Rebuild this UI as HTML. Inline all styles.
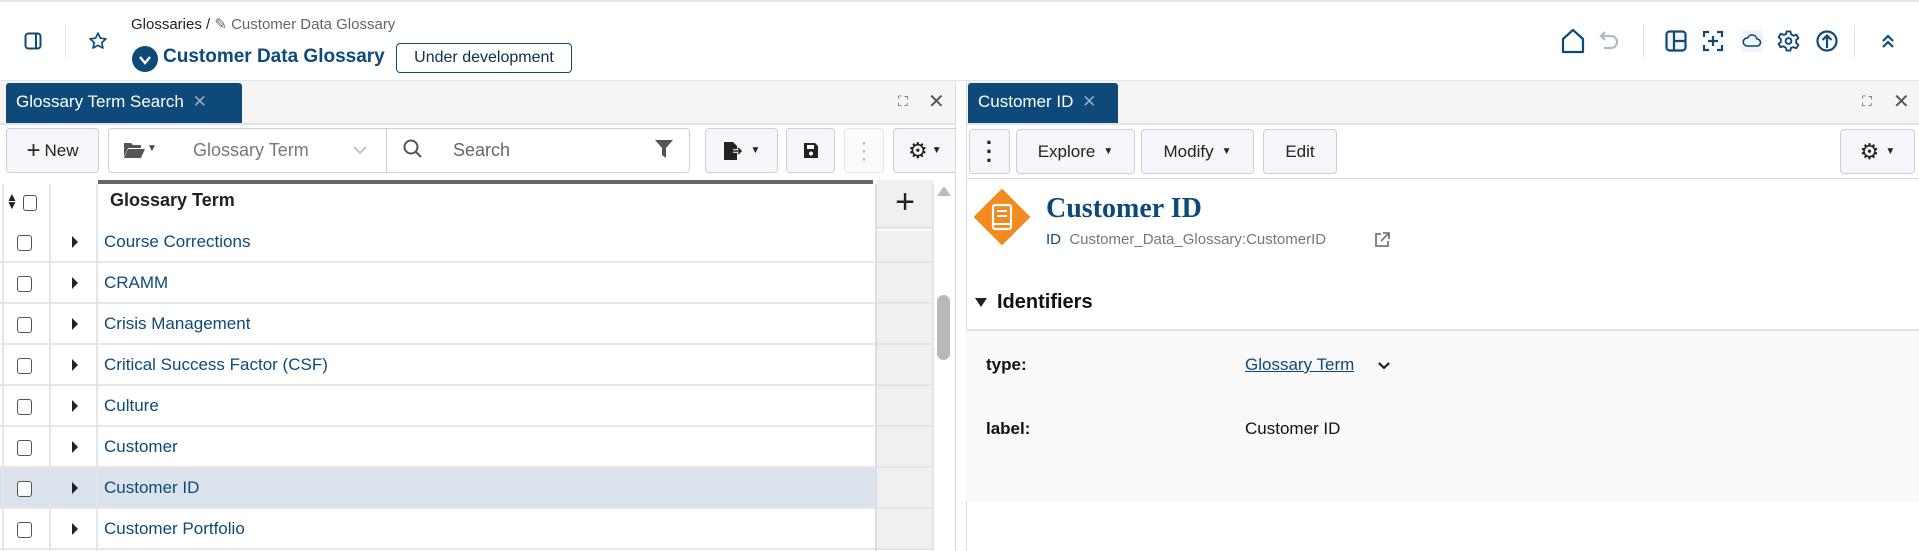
<!DOCTYPE html>
<html><head><meta charset="utf-8"><style>
*{box-sizing:border-box;margin:0;padding:0}
body{width:1919px;height:551px;overflow:hidden;background:#fff;font-family:"Liberation Sans",sans-serif;position:relative;color:#222}
.a{position:absolute}
.btn{position:absolute;border:1px solid #c9cfdc;border-radius:4px;background:#f5f6fa;display:flex;align-items:center;justify-content:center;font-size:17px;color:#222}
.row{position:absolute;left:0;width:876px;height:41px;border-bottom:2px solid #e5e7ea;background:#fff}
.row .cb{position:absolute;left:17px;top:13px;width:15px;height:16px;border:1.5px solid #555;border-radius:3px;background:#fff}
.row .tri{position:absolute;left:72px;top:14px;width:0;height:0;border-left:6px solid #222;border-top:6px solid transparent;border-bottom:6px solid transparent}
.row .t{position:absolute;left:104px;top:10px;font-size:17px;color:#0d4a7a}
.rc{position:absolute;left:877px;width:56px;height:41px;background:#eff0f2;border-bottom:2px solid #e3e5e8}
</style></head><body>
<div class="a" style="left:0;top:0;width:1919px;height:2px;background:#e6e8eb"></div>
<!-- header -->
<svg class="a" style="left:24px;top:32px" width="18" height="18" viewBox="0 0 18 18"><rect x="1.5" y="1.5" width="15" height="15" rx="3" fill="none" stroke="#0d4a7a" stroke-width="2"/><line x1="12" y1="2" x2="12" y2="16" stroke="#0d4a7a" stroke-width="2"/></svg>
<div class="a" style="left:65px;top:25px;width:1px;height:32px;background:#e0e3e8"></div>
<svg class="a" style="left:88px;top:31px" width="20" height="20" viewBox="0 0 24 24"><path d="M12 2.5l2.9 6.1 6.6.8-4.9 4.5 1.3 6.6L12 17.2l-5.9 3.3 1.3-6.6-4.9-4.5 6.6-.8z" fill="none" stroke="#0d4a7a" stroke-width="2" stroke-linejoin="round"/></svg>
<div class="a" style="left:131px;top:15px;font-size:15px;color:#222">Glossaries / <span style="color:#666">✎ Customer Data Glossary</span></div>
<div class="a" style="left:132px;top:46px;width:26px;height:26px;border-radius:50%;background:#0d4a7a"></div>
<svg class="a" style="left:137px;top:52px" width="16" height="16" viewBox="0 0 16 16"><path d="M3 5l5 6 5-6" fill="none" stroke="#fff" stroke-width="2.4"/></svg>
<div class="a" style="left:163px;top:46px;font-size:19px;font-weight:bold;color:#0d4a7a">Customer Data Glossary</div>
<div class="a" style="left:396px;top:43px;width:176px;height:30px;border:1.5px solid #0d4a7a;border-radius:4px;font-size:16px;color:#0d3050;display:flex;align-items:center;justify-content:center">Under development</div>
<svg class="a" style="left:1560px;top:28px" width="26" height="26" viewBox="0 0 26 26"><path d="M3 24V11L13 2l10 9v13z" fill="none" stroke="#0d4a7a" stroke-width="2.2" stroke-linejoin="round"/></svg>
<svg class="a" style="left:1598px;top:29px" width="24" height="24" viewBox="0 0 24 24"><path d="M7 3L3 7l4 4M3 7h10a6 6 0 010 12H6" fill="none" stroke="#a7bccd" stroke-width="2.2"/></svg>
<div class="a" style="left:1643px;top:25px;width:1px;height:32px;background:#dde1e6"></div>
<svg class="a" style="left:1665px;top:30px" width="22" height="22" viewBox="0 0 22 22"><rect x="1.5" y="1.5" width="19" height="19" rx="3" fill="#f3f5f8" stroke="#0d4a7a" stroke-width="2.2"/><path d="M9 2v18M9 11h11" stroke="#0d4a7a" stroke-width="2.2"/></svg>
<svg class="a" style="left:1702px;top:30px" width="22" height="22" viewBox="0 0 22 22"><path d="M2 7V2h5M15 2h5v5M20 15v5h-5M7 20H2v-5M11 6v10M6 11h10" fill="none" stroke="#0d4a7a" stroke-width="2.2"/></svg>
<div class="a" style="left:1741px;top:30px;width:22px;height:22px;background:#f1f3f7;border-radius:4px"></div>
<svg class="a" style="left:1742px;top:33px" width="20" height="16" viewBox="0 0 20 16"><path d="M5 13h10a3.5 3.5 0 000-7 5 5 0 00-9.5-1A4 4 0 005 13z" fill="none" stroke="#0d4a7a" stroke-width="1.6"/></svg>
<svg class="a" style="left:1777px;top:29px" width="23" height="24" viewBox="0 0 24 24"><path d="M10 2h4l.7 3 2.6 1.5 3-1 2 3.5-2.3 2v3l2.3 2-2 3.5-3-1L14.7 19 14 22h-4l-.7-3-2.6-1.5-3 1-2-3.5 2.3-2v-3l-2.3-2 2-3.5 3 1L9.3 5z" fill="none" stroke="#0d4a7a" stroke-width="2" stroke-linejoin="round"/><circle cx="12" cy="12" r="3" fill="none" stroke="#0d4a7a" stroke-width="2"/></svg>
<svg class="a" style="left:1816px;top:30px" width="22" height="22" viewBox="0 0 22 22"><circle cx="11" cy="11" r="9.5" fill="none" stroke="#0d4a7a" stroke-width="2.2"/><path d="M11 18V6M6.5 10L11 5.5 15.5 10" fill="none" stroke="#0d4a7a" stroke-width="2.2"/></svg>
<div class="a" style="left:1854px;top:25px;width:1px;height:32px;background:#dde1e6"></div>
<svg class="a" style="left:1881px;top:33px" width="14" height="16" viewBox="0 0 14 16"><path d="M2 8l5-5 5 5M2 14l5-5 5 5" fill="none" stroke="#0d4a7a" stroke-width="2.2"/></svg>
<div class="a" style="left:0;top:80px;width:1919px;height:1px;background:#e0e4e8"></div>
<!-- tab bars -->
<div class="a" style="left:0;top:81px;width:1919px;height:42px;background:#f5f5f5"></div>
<div class="a" style="left:0;top:123px;width:1919px;height:2px;background:#e2e2e2"></div>
<div class="a" style="left:6px;top:83px;width:236px;height:40px;background:#0d4a7a;border-radius:3px 3px 0 0;color:#fff;font-size:17px;padding:9px 0 0 10px">Glossary Term Search <span style="color:#9ab;margin-left:4px">✕</span></div>
<div class="a" style="left:968px;top:83px;width:150px;height:40px;background:#0d4a7a;border-radius:3px 3px 0 0;color:#fff;font-size:17px;padding:9px 0 0 10px">Customer ID <span style="color:#9ab;margin-left:4px">✕</span></div>
<div class="a" style="left:898px;top:93px;font-size:14px;color:#555">⛶</div>
<div class="a" style="left:928px;top:89px;font-size:20px;color:#555">✕</div>
<div class="a" style="left:1862px;top:93px;font-size:14px;color:#555">⛶</div>
<div class="a" style="left:1893px;top:89px;font-size:20px;color:#555">✕</div>
<!-- left toolbar -->
<div class="btn" style="left:6px;top:128px;width:93px;height:45px"><span style="font-size:24px;margin-right:4px">+</span>New</div>
<div class="a" style="left:108px;top:128px;width:582px;height:45px;border:1px solid #c9cfdc;border-radius:4px;background:#fff"></div>
<div class="a" style="left:386px;top:129px;width:1px;height:43px;background:#c9cfdc"></div>
<svg class="a" style="left:123px;top:141px" width="22" height="18" viewBox="0 0 22 18"><path d="M1 2h7l2 2h8v3H5L1 16zM5 8h17l-4 9H1z" fill="#555"/></svg>
<div class="a" style="left:147px;top:143px;font-size:10px;color:#444">▼</div>
<div class="a" style="left:193px;top:140px;font-size:18px;color:#777">Glossary Term</div>
<svg class="a" style="left:352px;top:144px" width="16" height="12" viewBox="0 0 16 12"><path d="M2 3l6 6 6-6" fill="none" stroke="#bbb" stroke-width="1.6"/></svg>
<svg class="a" style="left:402px;top:138px" width="22" height="22" viewBox="0 0 22 22"><circle cx="9" cy="9" r="6.5" fill="none" stroke="#555" stroke-width="2"/><path d="M14 14l5 5" stroke="#555" stroke-width="2"/></svg>
<div class="a" style="left:453px;top:140px;font-size:18px;color:#666">Search</div>
<svg class="a" style="left:654px;top:139px" width="20" height="20" viewBox="0 0 20 20"><path d="M1 1h18l-7 8v10l-4-3V9z" fill="#555"/></svg>
<div class="btn" style="left:705px;top:128px;width:73px;height:45px"><svg width="22" height="20" viewBox="0 0 22 20"><path d="M1 1h9l4 4v14H1z" fill="#222"/><path d="M10 10h8M15 7l3 3-3 3" stroke="#fff" stroke-width="3.5" fill="none"/><path d="M10 10h8M15 7l3 3-3 3" stroke="#222" stroke-width="1.6" fill="none"/></svg><span style="font-size:10px;margin-left:6px">▼</span></div>
<div class="btn" style="left:786px;top:128px;width:49px;height:45px"><svg width="16" height="17" viewBox="0 0 16 17"><path d="M1 1h11l3 3v12H1z" fill="#222"/><rect x="4" y="3" width="7" height="4" fill="#fff"/><circle cx="8" cy="11.5" r="2" fill="#fff"/></svg></div>
<div class="btn" style="left:844px;top:128px;width:40px;height:45px;background:#fafbfd;border-color:#e3e6ec;color:#aaa;font-size:20px;line-height:8px;flex-direction:column">·<br>·<br>·</div>
<div class="btn" style="left:893px;top:128px;width:62px;height:45px;justify-content:flex-start;padding-left:14px;border-right:none;border-radius:4px 0 0 4px"><span style="font-size:22px">⚙</span><span style="font-size:10px;margin-left:4px">▼</span></div>
<!-- table -->
<div class="a" style="left:0;top:178px;width:955px;height:373px;background:#fff"></div>
<div class="a" style="left:98px;top:180px;width:775px;height:4px;background:#666"></div>
<div class="a" style="left:0;top:184px;width:876px;height:45px;border-bottom:3px solid #e3e5e8"></div>
<div class="a" style="left:6px;top:193px;font-size:12px;line-height:8px;color:#222">▲<br>▼</div>
<div class="a" style="left:23px;top:195px;width:14px;height:16px;border:1.5px solid #555;border-radius:3px"></div>
<div class="a" style="left:110px;top:190px;font-size:18px;font-weight:bold;color:#222">Glossary Term</div>
<div class="a" style="left:877px;top:180px;width:56px;height:49px;background:#eff0f2;border-bottom:3px solid #e3e5e8;font-size:34px;text-align:center;line-height:44px;color:#222">+</div>
<div class="a" style="left:934px;top:180px;width:21px;height:371px;background:#fff"></div>
<div class="a" style="left:937px;top:186px;width:0;height:0;border-left:7px solid transparent;border-right:7px solid transparent;border-bottom:10px solid #bbb"></div>
<div class="a" style="left:937px;top:295px;width:13px;height:65px;border-radius:7px;background:#b8b8b8"></div>
<div class="row" style="top:222px"><div class="cb"></div><div class="tri"></div><div class="t">Course Corrections</div></div>
<div class="row" style="top:263px"><div class="cb"></div><div class="tri"></div><div class="t">CRAMM</div></div>
<div class="row" style="top:304px"><div class="cb"></div><div class="tri"></div><div class="t">Crisis Management</div></div>
<div class="row" style="top:345px"><div class="cb"></div><div class="tri"></div><div class="t">Critical Success Factor (CSF)</div></div>
<div class="row" style="top:386px"><div class="cb"></div><div class="tri"></div><div class="t">Culture</div></div>
<div class="row" style="top:427px"><div class="cb"></div><div class="tri"></div><div class="t">Customer</div></div>
<div class="row" style="top:468px;background:#dae3eb"><div class="cb"></div><div class="tri"></div><div class="t">Customer ID</div></div>
<div class="row" style="top:509px"><div class="cb"></div><div class="tri"></div><div class="t">Customer Portfolio</div></div>
<div class="rc" style="top:231px;height:32px"></div><div class="rc" style="top:263px"></div><div class="rc" style="top:304px"></div><div class="rc" style="top:345px"></div><div class="rc" style="top:386px"></div><div class="rc" style="top:427px"></div><div class="rc" style="top:468px"></div><div class="rc" style="top:509px"></div>
<div class="a" style="left:2px;top:184px;width:2px;height:367px;background:#e3e5e8"></div>
<div class="a" style="left:49px;top:184px;width:2px;height:367px;background:#e3e5e8"></div>
<div class="a" style="left:96px;top:184px;width:2px;height:367px;background:#e3e5e8"></div>
<div class="a" style="left:875px;top:184px;width:2px;height:367px;background:#dcdee2"></div>
<div class="a" style="left:932px;top:184px;width:2px;height:367px;background:#e3e5e8"></div>
<!-- divider -->
<div class="a" style="left:955px;top:81px;width:12px;height:470px;background:#fff;border-left:1px solid #ddd;border-right:1px solid #ddd"></div>
<!-- right toolbar -->
<div class="btn" style="left:969px;top:129px;width:41px;height:45px;font-size:22px;line-height:9px;flex-direction:column;font-weight:bold">·<br>·<br>·</div>
<div class="btn" style="left:1016px;top:129px;width:119px;height:45px">Explore<span style="font-size:10px;margin-left:8px">▼</span></div>
<div class="btn" style="left:1141px;top:129px;width:113px;height:45px">Modify<span style="font-size:10px;margin-left:8px">▼</span></div>
<div class="btn" style="left:1263px;top:129px;width:74px;height:45px">Edit</div>
<div class="btn" style="left:1840px;top:129px;width:75px;height:45px"><span style="font-size:22px">⚙</span><span style="font-size:10px;margin-left:6px">▼</span></div>
<div class="a" style="left:966px;top:178px;width:953px;height:1px;background:#ddd"></div>
<!-- right content -->
<svg class="a" style="left:974px;top:189px" width="56" height="56" viewBox="0 0 56 56"><path d="M28 1l27 27-27 27L1 28z" fill="#f28a20" stroke="#f28a20" stroke-width="2" stroke-linejoin="round"/><rect x="19" y="16" width="18" height="24" rx="2" fill="none" stroke="#fff" stroke-width="2.2"/><path d="M23 22h10M23 27h10M19 35h18" stroke="#fff" stroke-width="2"/></svg>
<div class="a" style="left:1046px;top:193px;font-family:'Liberation Serif',serif;font-size:28px;font-weight:bold;color:#0d4a7a">Customer ID</div>
<div class="a" style="left:1046px;top:231px;font-size:15px;color:#777"><span style="color:#0d4a7a">ID</span>&nbsp; Customer_Data_Glossary:CustomerID</div>
<svg class="a" style="left:1374px;top:232px" width="16" height="16" viewBox="0 0 16 16"><path d="M7 2H2v12h12V9M9 1h6v6M15 1L7 9" fill="none" stroke="#777" stroke-width="1.8"/></svg>
<svg class="a" style="left:975px;top:298px" width="12" height="10" viewBox="0 0 12 10"><path d="M0 0h12L6 9z" fill="#222"/></svg>
<div class="a" style="left:997px;top:291px;font-size:20px;font-weight:bold;color:#111">Identifiers</div>
<div class="a" style="left:966px;top:329px;width:953px;height:2px;background:#e3e3e3"></div>
<div class="a" style="left:966px;top:331px;width:953px;height:170px;background:#f9f9f9"></div>
<div class="a" style="left:986px;top:355px;font-size:17px;font-weight:bold;color:#111">type:</div>
<div class="a" style="left:1245px;top:355px;font-size:17px;color:#0d4a7a;text-decoration:underline">Glossary Term</div>
<svg class="a" style="left:1377px;top:360px" width="14" height="12" viewBox="0 0 14 12"><path d="M2 3l5 5 5-5" fill="none" stroke="#111" stroke-width="2"/></svg>
<div class="a" style="left:986px;top:419px;font-size:17px;font-weight:bold;color:#111">label:</div>
<div class="a" style="left:1245px;top:419px;font-size:17px;color:#111">Customer ID</div>
</body></html>
